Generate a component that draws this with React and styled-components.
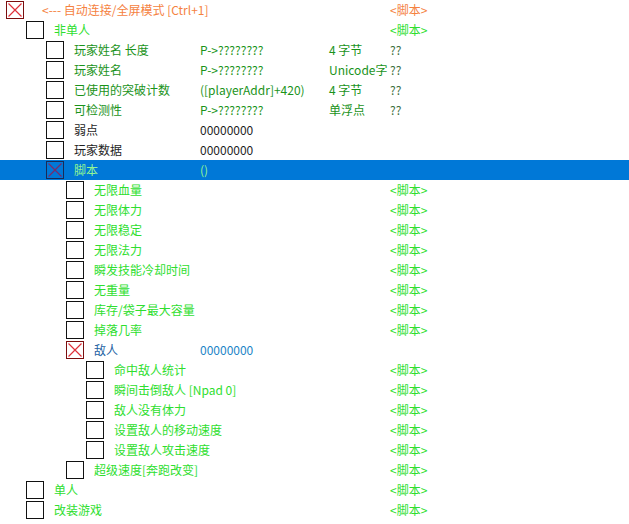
import React from 'react'
import styled, { createGlobalStyle } from 'styled-components'

const GlobalStyle = createGlobalStyle`
  html, body {
    margin: 0;
    padding: 0;
    background: #ffffff;
  }
  body {
    font-family: "Noto Sans CJK SC", "Microsoft YaHei", sans-serif;
    font-size: 12px;
  }
`

const colors = {
  orange: '#f5823f',
  bright: '#2ede2e',
  dark: '#1a931a',
  black: '#1e1e1e',
  blue: '#2463a3',
  blueValue: '#1c84c6',
  unknown: '#3d6e3d',
  selected: '#93f593',
}

const rows = [
  { level: 0, checked: true, color: 'orange', name: '<--- 自动连接/全屏模式 [Ctrl+1]', value: '<脚本>' },
  { level: 1, color: 'bright', name: '非单人', value: '<脚本>' },
  { level: 2, color: 'dark', name: '玩家姓名 长度', addr: 'P->????????', type: '4 字节', value: '??', valueColor: 'unknown' },
  { level: 2, color: 'dark', name: '玩家姓名', addr: 'P->????????', type: 'Unicode字', value: '??', valueColor: 'unknown' },
  { level: 2, color: 'dark', name: '已使用的突破计数', addr: '([playerAddr]+420)', type: '4 字节', value: '??', valueColor: 'unknown' },
  { level: 2, color: 'dark', name: '可检测性', addr: 'P->????????', type: '单浮点', value: '??', valueColor: 'unknown' },
  { level: 2, color: 'black', name: '弱点', addr: '00000000' },
  { level: 2, color: 'black', name: '玩家数据', addr: '00000000' },
  { level: 2, checked: true, selected: true, color: 'selected', name: '脚本', addr: '()' },
  { level: 3, color: 'bright', name: '无限血量', value: '<脚本>' },
  { level: 3, color: 'bright', name: '无限体力', value: '<脚本>' },
  { level: 3, color: 'bright', name: '无限稳定', value: '<脚本>' },
  { level: 3, color: 'bright', name: '无限法力', value: '<脚本>' },
  { level: 3, color: 'bright', name: '瞬发技能冷却时间', value: '<脚本>' },
  { level: 3, color: 'bright', name: '无重量', value: '<脚本>' },
  { level: 3, color: 'bright', name: '库存/袋子最大容量', value: '<脚本>' },
  { level: 3, color: 'bright', name: '掉落几率', value: '<脚本>' },
  { level: 3, checked: true, color: 'blue', name: '敌人', addr: '00000000', addrColor: 'blueValue' },
  { level: 4, color: 'bright', name: '命中敌人统计', value: '<脚本>' },
  { level: 4, color: 'bright', name: '瞬间击倒敌人 [Npad 0]', value: '<脚本>' },
  { level: 4, color: 'bright', name: '敌人没有体力', value: '<脚本>' },
  { level: 4, color: 'bright', name: '设置敌人的移动速度', value: '<脚本>' },
  { level: 4, color: 'bright', name: '设置敌人攻击速度', value: '<脚本>' },
  { level: 3, color: 'bright', name: '超级速度[奔跑改变]', value: '<脚本>' },
  { level: 1, color: 'bright', name: '单人', value: '<脚本>' },
  { level: 1, color: 'bright', name: '改装游戏', value: '<脚本>' },
]

const CheckBox = ({ checked, selected }) => (
  <Box $checked={checked} $selected={selected}>
    {checked ? (
      <svg width="16" height="16" viewBox="0 0 16 16">
        <path d="M1.5 1.5 L14.5 14.5 M14.5 1.5 L1.5 14.5" stroke={selected ? '#7a2a6a' : '#e0303a'} strokeWidth="1.2" />
      </svg>
    ) : null}
  </Box>
)

const App = () => {
  return (
    <>
      <GlobalStyle />
      <Table>
        {rows.map((row, index) => (
          <Row key={index} $selected={row.selected}>
            <NameCell $level={row.level}>
              <CheckBox checked={row.checked} selected={row.selected} />
              <Text $color={colors[row.color]}>{row.name}</Text>
            </NameCell>
            <Text $color={colors[row.addrColor || row.color]}>{row.addr}</Text>
            <Text $color={colors[row.color]}>{row.type}</Text>
            <Text $color={colors[row.valueColor || row.color]}>{row.value}</Text>
          </Row>
        ))}
      </Table>
    </>
  )
}

const Table = styled.div`
  display: flex;
  flex-direction: column;
  width: 629px;
`

const Row = styled.div`
  display: grid;
  grid-template-columns: 200px 129px 61px 1fr;
  height: 20px;
  align-items: center;
  background: ${({ $selected }) => ($selected ? '#0078d7' : 'transparent')};
`

const NameCell = styled.div`
  display: flex;
  align-items: center;
  gap: ${({ $level }) => ($level === 0 ? 18 : 10)}px;
  padding-left: ${({ $level }) => 6 + $level * 20}px;
  min-width: 0;
`

const Box = styled.div`
  flex: none;
  box-sizing: border-box;
  width: 18px;
  height: 18px;
  border: 1.5px solid ${({ $checked, $selected }) => ($selected ? '#1b2a55' : $checked ? '#7a0e0e' : '#111')};
  display: flex;
  align-items: center;
  justify-content: center;
`

const Text = styled.span`
  color: ${({ $color }) => $color};
  white-space: nowrap;
  line-height: 20px;
  overflow: visible;
`

export default App
